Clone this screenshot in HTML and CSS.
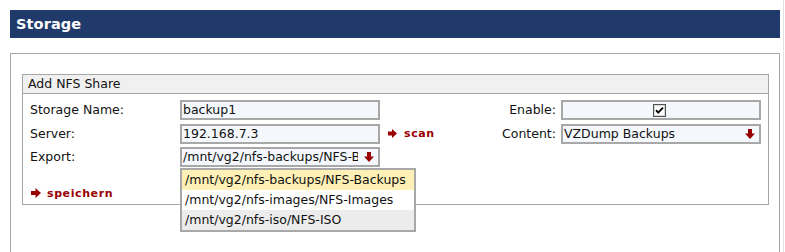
FILE: index.html
```html
<!DOCTYPE html>
<html>
<head>
<meta charset="utf-8">
<link rel="stylesheet" href="styles.css">
</head>
<body>
<div class="page">
  <div class="header">Storage</div>
  <div class="panel">
    <div class="fieldset">
      <div class="legend">Add NFS Share</div>
      <div class="form">
        <div class="grid">
          <div class="label">Storage Name:</div>
          <div class="field">backup1</div>
          <div></div>
          <div class="label right">Enable:</div>
          <div class="field center">
            <svg class="check" width="13" height="13" viewBox="0 0 13 13"><rect x="0.5" y="0.5" width="12" height="12" fill="#fff" stroke="#505050"/><rect x="1.5" y="1.5" width="10" height="10" fill="none" stroke="#d8d8d8"/><path d="M3 6.2l2.2 2.4L10 3.6" fill="none" stroke="#000" stroke-width="1.8"/></svg>
          </div>

          <div class="label">Server:</div>
          <div class="field">192.168.7.3</div>
          <div class="action scan"><svg class="arrow-r" width="9" height="9" viewBox="0 0 9 9"><path d="M0 2.5h4V0l5 4.5L4 9V6.5H0z" fill="#990000"/></svg><span>scan</span></div>
          <div class="label right">Content:</div>
          <div class="field select"><span class="value">VZDump Backups</span><svg class="arrow-d" width="10" height="10" viewBox="0 0 10 10"><path d="M3 0h4v4.5h3L5 10 0 4.5h3z" fill="#990000"/></svg></div>

          <div class="label">Export:</div>
          <div class="field select export">
            <span class="value">/mnt/vg2/nfs-backups/NFS-Backups</span><svg class="arrow-d" width="10" height="10" viewBox="0 0 10 10"><path d="M3 0h4v4.5h3L5 10 0 4.5h3z" fill="#990000"/></svg>
            <ul class="dropdown">
              <li class="item hover">/mnt/vg2/nfs-backups/NFS-Backups</li>
              <li class="item">/mnt/vg2/nfs-images/NFS-Images</li>
              <li class="item alt">/mnt/vg2/nfs-iso/NFS-ISO</li>
            </ul>
          </div>
        </div>
        <div class="action save"><svg class="arrow-r" width="10" height="10" viewBox="0 0 10 10"><path d="M0 3h4.5V0l5.5 5-5.5 5V7H0z" fill="#990000"/></svg><span>speichern</span></div>
      </div>
    </div>
  </div>
</div>
</body>
</html>
```
FILE: styles.css
```css
html, body {
  margin: 0;
  padding: 0;
  background: #fff;
}

body {
  font-family: "DejaVu Sans", Verdana, sans-serif;
  font-size: 12.5px;
  color: #111;
  height: 252px;
  overflow: hidden;
}

.page {
  width: 770px;
  padding: 10px 3px 0 10px;
  border-right: 1px solid #e2e2e2;
  height: 242px;
}

.header {
  height: 28px;
  line-height: 28px;
  background: #203a6b;
  color: #fff;
  font-weight: bold;
  font-size: 14.5px;
  padding-left: 6px;
  letter-spacing: 0.1px;
}

.panel {
  margin-top: 15px;
  border: 1px solid #a6a6a6;
  padding: 20px 10px 60px 11px;
}

.fieldset {
  border: 1px solid #a6a6a6;
}

.legend {
  height: 18px;
  line-height: 18px;
  background: #f0f0f0;
  border-bottom: 1px solid #a6a6a6;
  padding-left: 5px;
}

.form {
  padding: 6px 7px 4px 7px;
}

.grid {
  display: grid;
  grid-template-columns: 150px 200px 1fr auto 200px;
  grid-auto-rows: 20px;
  row-gap: 3.5px;
  align-items: center;
}

.label {
  line-height: 20px;
  white-space: nowrap;
}

.label.right {
  text-align: right;
  padding-right: 5px;
}

.field {
  box-sizing: border-box;
  height: 20px;
  border: 2px solid #a8a8a8;
  background: #f4f8fc;
  line-height: 16px;
  padding: 0 0 0 1px;
  white-space: nowrap;
  display: flex;
  align-items: center;
}

.field.center {
  justify-content: center;
}

.check {
  display: block;
  margin-left: -5px;
}

.field.select {
  position: relative;
  padding-right: 4px;
}

.field.select .value {
  flex: 1;
  overflow: hidden;
  white-space: nowrap;
}

.field.export .value {
  margin-right: 6px;
}

.arrow-d {
  display: block;
  flex: none;
}

.action {
  display: flex;
  align-items: center;
  color: #990000;
  font-weight: bold;
  font-size: 11px;
  letter-spacing: 0.6px;
  white-space: nowrap;
}

.action .arrow-r {
  display: block;
  flex: none;
}

.scan {
  padding-left: 8px;
  gap: 7px;
}

.save {
  margin-top: 19px;
  height: 14px;
  padding-left: 1px;
  gap: 6px;
}

.dropdown {
  position: absolute;
  left: -2px;
  top: calc(100% + 3px);
  width: 236px;
  box-sizing: border-box;
  margin: 0;
  padding: 0;
  list-style: none;
  border: 2px solid #a8a8a8;
  background: #fff;
  z-index: 5;
}

.item {
  height: 20px;
  line-height: 20px;
  padding-left: 3px;
  white-space: nowrap;
}

.item.hover {
  background: #fff0b6;
}

.item.alt {
  background: #ececec;
}
```
